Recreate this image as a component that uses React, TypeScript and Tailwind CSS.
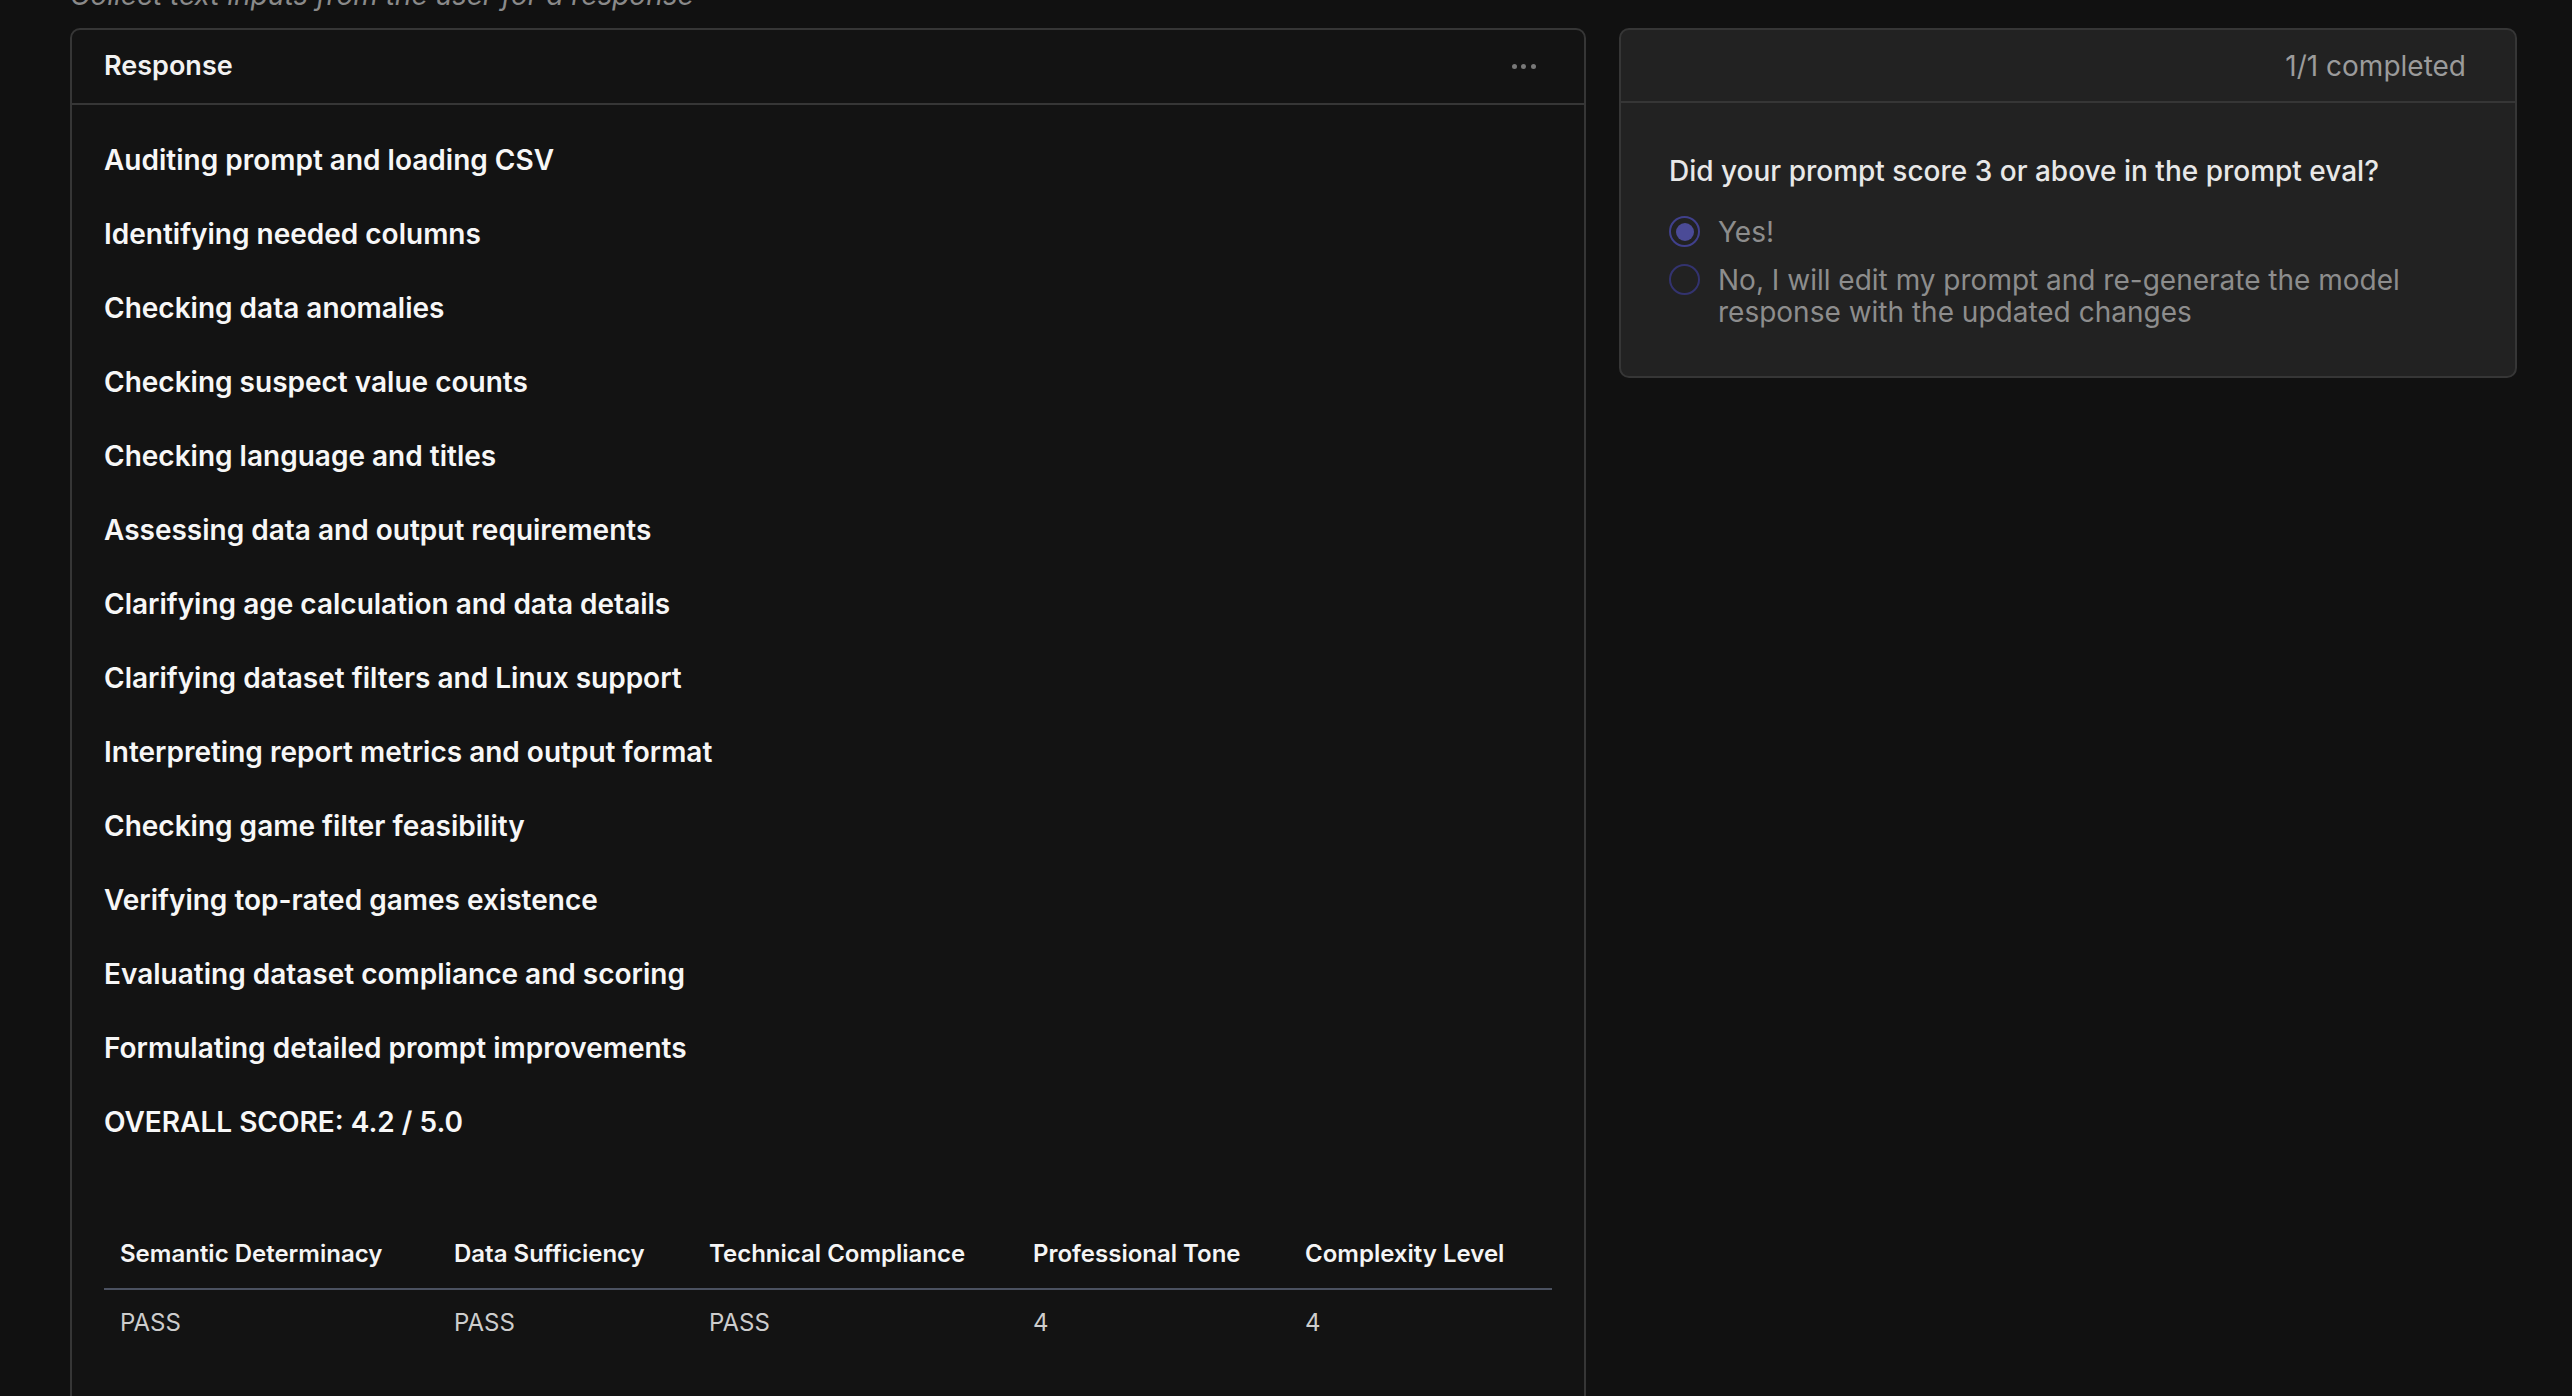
const steps = [
  "Auditing prompt and loading CSV",
  "Identifying needed columns",
  "Checking data anomalies",
  "Checking suspect value counts",
  "Checking language and titles",
  "Assessing data and output requirements",
  "Clarifying age calculation and data details",
  "Clarifying dataset filters and Linux support",
  "Interpreting report metrics and output format",
  "Checking game filter feasibility",
  "Verifying top-rated games existence",
  "Evaluating dataset compliance and scoring",
  "Formulating detailed prompt improvements",
  "OVERALL SCORE: 4.2 / 5.0",
];

const scores = [
  { label: "Semantic Determinacy", value: "PASS", width: "w-[334px]" },
  { label: "Data Sufficiency", value: "PASS", width: "w-[255px]" },
  { label: "Technical Compliance", value: "PASS", width: "w-[324px]" },
  { label: "Professional Tone", value: "4", width: "w-[272px]" },
  { label: "Complexity Level", value: "4", width: "w-[263px]" },
];

const options = [
  { id: "yes", label: "Yes!", checked: true },
  {
    id: "no",
    label:
      "No, I will edit my prompt and re-generate the model response with the updated changes",
    checked: false,
  },
];

const ResponseCard = () => {
  return (
    <section className="w-[1516px] shrink-0 rounded-[10px] border-2 border-[#363636] bg-[#131313]">
      <div className="flex h-[75px] items-center justify-between border-b-2 border-[#363636] pl-[32px] pr-[48px]">
        <h2 className="text-[27px] font-semibold text-[#f2f2f2]">Response</h2>
        <button className="flex items-center gap-[4.7px]">
          <span className="h-[5px] w-[5px] rounded-full bg-[#787878]" />
          <span className="h-[5px] w-[5px] rounded-full bg-[#787878]" />
          <span className="h-[5px] w-[5px] rounded-full bg-[#787878]" />
        </button>
      </div>
      <div className="px-[32px] pb-[80px] pt-[34px]">
        <div className="flex flex-col gap-[32px]">
          {steps.map((step) => (
            <p
              key={step}
              className="text-[28px] font-semibold leading-[42px] text-[#f7f7f7]"
            >
              {step}
            </p>
          ))}
        </div>
        <table className="mt-[77px] w-[1448px] table-fixed border-collapse">
          <thead>
            <tr className="border-b-2 border-[#4b5160]">
              {scores.map(({ label, width }) => (
                <th
                  key={label}
                  className={`${width} p-[16px] text-left text-[24px] font-semibold leading-[36px] text-[#f5f5f5]`}
                >
                  {label}
                </th>
              ))}
            </tr>
          </thead>
          <tbody>
            <tr>
              {scores.map(({ label, value }) => (
                <td
                  key={label}
                  className="p-[16px] text-[24px] leading-[34px] text-[#cdcdcd]"
                >
                  {value}
                </td>
              ))}
            </tr>
          </tbody>
        </table>
      </div>
    </section>
  );
};

const QuestionCard = () => {
  return (
    <section className="w-[898px] shrink-0 rounded-[10px] border-2 border-[#363636] bg-[#222222]">
      <div className="flex h-[73px] items-center justify-end border-b-2 border-[#363636] pr-[49px]">
        <span className="text-[28px] text-[#9b9b9b]">1/1 completed</span>
      </div>
      <div className="px-[48px] pb-[48px] pt-[47px]">
        <p className="text-[28px] font-medium leading-[42px] text-[#e8e8e8]">
          Did your prompt score 3 or above in the prompt eval?
        </p>
        <div className="mt-[24px] flex flex-col gap-[16px]">
          {options.map(({ id, label, checked }) => (
            <label key={id} className="flex items-start gap-[18px]">
              <span
                className={`flex h-[31px] w-[31px] shrink-0 items-center justify-center rounded-full border-2 ${
                  checked ? "border-[#40408c]" : "border-[#33336f]"
                }`}
              >
                {checked && (
                  <span className="h-[18px] w-[18px] rounded-full bg-[#4b4b97]" />
                )}
              </span>
              <span className="text-[28px] leading-[32px] text-[#8d8d8d]">
                {label}
              </span>
            </label>
          ))}
        </div>
      </div>
    </section>
  );
};

export default function App() {
  return (
    <div className="flex h-screen flex-col overflow-hidden bg-[#111111] pl-[70px] font-[Inter,sans-serif]">
      <p className="-mt-[19px] text-[28px] italic leading-[28px] text-[#8a8a8a]">
        Collect text inputs from the user for a response
      </p>
      <div className="mt-[19px] flex items-start gap-[33px]">
        <ResponseCard />
        <QuestionCard />
      </div>
    </div>
  );
}
